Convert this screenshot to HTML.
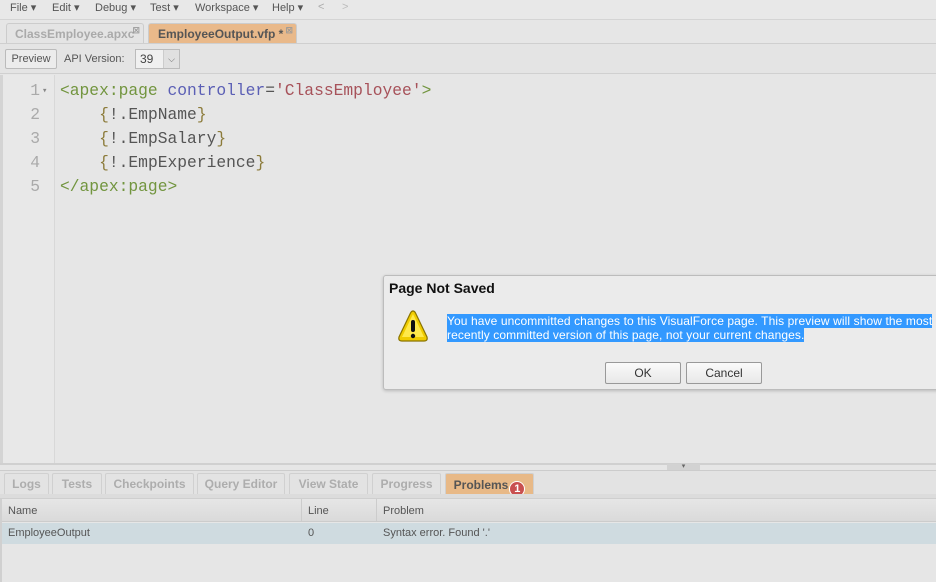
<!DOCTYPE html>
<html><head><meta charset="utf-8"><style>
*{margin:0;padding:0;box-sizing:border-box}
body{width:936px;height:582px;overflow:hidden;background:#e6e6e6;font-family:"Liberation Sans","DejaVu Sans",sans-serif;position:relative;font-size:11px;color:#444}
.a{position:absolute}
.menu span{position:absolute;top:0;font-size:11px;color:#555}
.tab{position:absolute;border:1px solid #ccc;border-bottom:none;border-radius:3px 3px 0 0;font-weight:bold;font-size:12px}
.code{font-family:"Liberation Mono","DejaVu Sans Mono",monospace;font-size:16.3px;line-height:24px;color:#555}
.ln{position:absolute;left:0;width:40px;text-align:right;color:#aaa}
.tg{color:#72953f}.at{color:#5b5fb5}.st{color:#a7525a}.br{color:#8c7b3a}
.btab{position:absolute;top:473px;height:21px;border:1px solid #d0d0d0;border-bottom:none;background:#e3e3e3;color:#adadad;font-weight:bold;font-size:12px;text-align:center;line-height:20px;border-radius:2px 2px 0 0}
.btn{position:absolute;top:362px;height:22px;border:1px solid #999;border-radius:2px;background:linear-gradient(#fafafa,#e8e8e8);text-align:center;line-height:20px;font-size:12px;color:#333}
</style></head><body>
<div class="a" style="left:0;top:0;width:936px;height:20px;background:#e8e8e8;border-bottom:1px solid #d4d4d4"></div>
<div class="menu">
<span style="left:10px;top:1px">File ▾</span><span style="left:52px;top:1px">Edit ▾</span><span style="left:95px;top:1px">Debug ▾</span><span style="left:150px;top:1px">Test ▾</span><span style="left:195px;top:1px">Workspace ▾</span><span style="left:272px;top:1px">Help ▾</span><span style="left:318px;top:1px;color:#aaa">&lt;</span><span style="left:342px;top:1px;color:#bbb">&gt;</span>
</div>
<div class="a" style="left:0;top:43px;width:936px;height:1px;background:#cfcfcf"></div>
<div class="tab" style="left:6px;top:23px;width:138px;height:20px;background:#e4e4e4;color:#aaa;padding:3px 0 0 8px">ClassEmployee.apxc<span style="font-size:9px;color:#999;position:absolute;right:3px;top:1px">⊠</span></div>
<div class="tab" style="left:148px;top:23px;width:149px;height:20px;background:#e9b98a;color:#555;padding:3px 0 0 9px">EmployeeOutput.vfp *<span style="font-size:9px;color:#999;position:absolute;right:3px;top:1px">⊠</span></div>
<div class="a" style="left:0;top:44px;width:936px;height:30px;background:#e4e4e4;border-bottom:1px solid #d0d0d0"></div>
<div class="a" style="left:5px;top:49px;width:52px;height:20px;border:1px solid #bbb;border-radius:2px;background:#ececec;font-size:11px;line-height:18px;text-align:center;color:#555">Preview</div>
<div class="a" style="left:64px;top:53px;font-size:11px;color:#555">API Version:</div>
<div class="a" style="left:135px;top:49px;width:45px;height:20px;border:1px solid #bbb;background:#f0f0f0;font-size:12px;line-height:18px;padding-left:4px;color:#444">39</div>
<div class="a" style="left:163px;top:50px;width:16px;height:18px;border-left:1px solid #ccc;background:#e0e0e0;font-size:9px;color:#666;text-align:center;line-height:18px">⌵</div>
<div class="a" style="left:0;top:75px;width:55px;height:388px;background:#e8e8e8;border-right:1px solid #d8d8d8"></div>
<div class="a" style="left:0;top:75px;width:3px;height:388px;background:#d4d4d4"></div>
<div class="code a" style="left:0;top:79px;width:936px">
<div class="ln" style="top:0">1</div><div class="a" style="left:42px;top:0;font-size:9px;color:#888">▾</div>
<div class="ln" style="top:24px">2</div><div class="ln" style="top:48px">3</div><div class="ln" style="top:72px">4</div><div class="ln" style="top:96px">5</div>
<div class="a" style="left:60px;top:0;white-space:pre"><span class="tg">&lt;apex:page</span> <span class="at">controller</span>=<span class="st">'ClassEmployee'</span><span class="tg">&gt;</span></div>
<div class="a" style="left:60px;top:24px;white-space:pre">    <span class="br">{</span>!.EmpName<span class="br">}</span></div>
<div class="a" style="left:60px;top:48px;white-space:pre">    <span class="br">{</span>!.EmpSalary<span class="br">}</span></div>
<div class="a" style="left:60px;top:72px;white-space:pre">    <span class="br">{</span>!.EmpExperience<span class="br">}</span></div>
<div class="a" style="left:60px;top:96px;white-space:pre"><span class="tg">&lt;/apex:page&gt;</span></div>
</div>
<!-- dialog -->
<div class="a" style="left:383px;top:275px;width:560px;height:115px;background:#ebebeb;border:1px solid #bcbcbc;border-radius:3px;box-shadow:0 1px 3px rgba(0,0,0,.2)"></div>
<div class="a" style="left:389px;top:280px;font-size:14px;font-weight:bold;color:#111">Page Not Saved</div>
<svg class="a" style="left:396px;top:309px" width="34" height="34" viewBox="0 0 34 34"><path d="M17 2 Q18.5 2 19.5 4 L31 28 Q32 32 28 32 L6 32 Q2 32 3 28 L14.5 4 Q15.5 2 17 2Z" fill="#f0cc00" stroke="#8a7400" stroke-width="1.2"/><path d="M17 5 L28 28 L6 28Z" fill="#ffe94a"/><rect x="15" y="11" width="4" height="12" rx="2" fill="#111"/><circle cx="17" cy="27" r="2.2" fill="#111"/></svg>
<div class="a" style="left:447px;top:314px;font-size:12px;line-height:14px;color:#fff;white-space:nowrap;letter-spacing:0.1px"><span style="background:#3399ff">You have uncommitted changes to this VisualForce page. This preview will show the most</span><br><span style="background:#3399ff">recently committed version of this page, not your current changes.</span></div>
<div class="btn" style="left:605px;width:76px">OK</div>
<div class="btn" style="left:686px;width:76px">Cancel</div>
<!-- bottom -->
<div class="a" style="left:0;top:463px;width:936px;height:2px;background:#d0d0d0"></div>
<div class="a" style="left:667px;top:464px;width:33px;height:6px;background:#d2d2d2;font-size:7px;color:#666;text-align:center;line-height:6px">▾</div>
<div class="a" style="left:0;top:470px;width:936px;height:1px;background:#ccc"></div>
<div class="a" style="left:0;top:471px;width:936px;height:25px;background:#e3e3e3"></div>
<div class="btab" style="left:4px;width:45px">Logs</div>
<div class="btab" style="left:52px;width:50px">Tests</div>
<div class="btab" style="left:105px;width:89px">Checkpoints</div>
<div class="btab" style="left:197px;width:88px">Query Editor</div>
<div class="btab" style="left:289px;width:79px">View State</div>
<div class="btab" style="left:372px;width:69px">Progress</div>
<div class="btab" style="left:445px;width:89px;background:#e8b987;color:#555;line-height:22px">Problems<span style="display:inline-block;width:16px;height:16px;border-radius:8px;background:#c95050;color:#fff;border:1px solid #fff;font-size:11px;line-height:14px;margin-left:1px;vertical-align:-3px">1</span></div>
<div class="a" style="left:0;top:494px;width:936px;height:5px;background:#dcdcdc;border-bottom:1px solid #cfcfcf"></div>
<div class="a" style="left:0;top:499px;width:936px;height:23px;background:linear-gradient(#e6e6e6,#dadada);border-bottom:1px solid #ccc"></div>
<div class="a" style="left:301px;top:499px;width:1px;height:23px;background:#ccc"></div>
<div class="a" style="left:376px;top:499px;width:1px;height:23px;background:#ccc"></div>
<div class="a" style="left:8px;top:505px;color:#555">Name</div>
<div class="a" style="left:308px;top:505px;color:#555">Line</div>
<div class="a" style="left:383px;top:505px;color:#555">Problem</div>
<div class="a" style="left:2px;top:523px;width:934px;height:21px;background:#cfdbe0"></div>
<div class="a" style="left:8px;top:527px;color:#555">EmployeeOutput</div>
<div class="a" style="left:308px;top:527px;color:#555">0</div>
<div class="a" style="left:383px;top:527px;color:#555">Syntax error. Found '.'</div>
<div class="a" style="left:0;top:499px;width:2px;height:83px;background:#d0d0d0"></div>
</body></html>
